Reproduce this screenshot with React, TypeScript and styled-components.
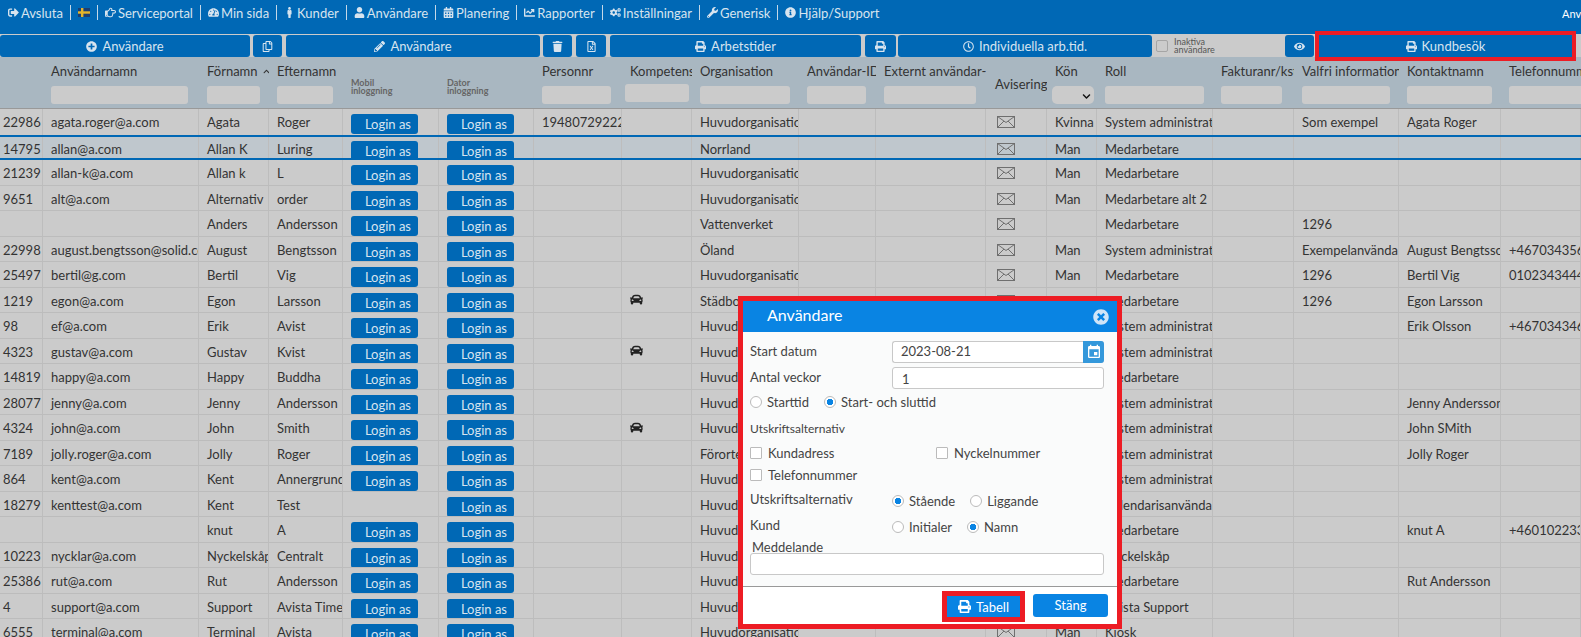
import React from "react";
import styled, { createGlobalStyle } from "styled-components";
import {
  FaCalendarAlt,
  FaCar,
  FaChartLine,
  FaChevronDown,
  FaChevronUp,
  FaCogs,
  FaEye,
  FaInfoCircle,
  FaMale,
  FaPencilAlt,
  FaPlusCircle,
  FaPrint,
  FaRegClock,
  FaRegCopy,
  FaRegFileExcel,
  FaRegHandPointRight,
  FaSignOutAlt,
  FaTachometerAlt,
  FaTimesCircle,
  FaTrash,
  FaUser,
  FaWrench,
} from "react-icons/fa";
import { MdEvent } from "react-icons/md";

const BLUE = "#0068b5";
const MODAL_BLUE = "#0984e3";
const RED = "#ed1c24";
const COLUMNS =
  "43px 156px 70px 74px 96px 95px 88px 70px 107px 77px 110px 61px 50px 116px 81px 105px 102px 1fr";

interface UserRow {
  id?: string;
  email?: string;
  first: string;
  last: string;
  personnr?: string;
  car?: boolean;
  org: string;
  gender?: string;
  role: string;
  info?: string;
  contact?: string;
  phone?: string;
  noMobile?: boolean;
}

const rows: UserRow[] = [
  { id: "22986", email: "agata.roger@a.com", first: "Agata", last: "Roger", personnr: "194807292223", org: "Huvudorganisation", gender: "Kvinna", role: "System administrator", info: "Som exempel", contact: "Agata Roger" },
  { id: "14795", email: "allan@a.com", first: "Allan K", last: "Luring", org: "Norrland", gender: "Man", role: "Medarbetare" },
  { id: "21239", email: "allan-k@a.com", first: "Allan k", last: "L", org: "Huvudorganisation", gender: "Man", role: "Medarbetare" },
  { id: "9651", email: "alt@a.com", first: "Alternativ", last: "order", org: "Huvudorganisation", gender: "Man", role: "Medarbetare alt 2" },
  { first: "Anders", last: "Andersson", org: "Vattenverket", role: "Medarbetare", info: "1296" },
  { id: "22998", email: "august.bengtsson@solid.com", first: "August", last: "Bengtsson", org: "Öland", gender: "Man", role: "System administrator", info: "Exempelanvändare", contact: "August Bengtsson", phone: "+46703435625455" },
  { id: "25497", email: "bertil@g.com", first: "Bertil", last: "Vig", org: "Huvudorganisation", gender: "Man", role: "Medarbetare", info: "1296", contact: "Bertil Vig", phone: "01023434444" },
  { id: "1219", email: "egon@a.com", first: "Egon", last: "Larsson", car: true, org: "Städbolaget", gender: "Man", role: "Medarbetare", info: "1296", contact: "Egon Larsson" },
  { id: "98", email: "ef@a.com", first: "Erik", last: "Avist", org: "Huvudorganisation", gender: "Man", role: "System administrator", contact: "Erik Olsson", phone: "+46703434645655" },
  { id: "4323", email: "gustav@a.com", first: "Gustav", last: "Kvist", car: true, org: "Huvudorganisation", gender: "Man", role: "System administrator" },
  { id: "14819", email: "happy@a.com", first: "Happy", last: "Buddha", org: "Huvudorganisation", gender: "Man", role: "Medarbetare" },
  { id: "28077", email: "jenny@a.com", first: "Jenny", last: "Andersson", org: "Huvudorganisation", gender: "Kvinna", role: "System administrator", contact: "Jenny Andersson" },
  { id: "4324", email: "john@a.com", first: "John", last: "Smith", car: true, org: "Huvudorganisation", gender: "Man", role: "System administrator", contact: "John SMith" },
  { id: "7189", email: "jolly.roger@a.com", first: "Jolly", last: "Roger", org: "Förorten", gender: "Man", role: "System administrator", contact: "Jolly Roger" },
  { id: "864", email: "kent@a.com", first: "Kent", last: "Annergrund", org: "Huvudorganisation", gender: "Man", role: "System administrator" },
  { id: "18279", email: "kenttest@a.com", first: "Kent", last: "Test", org: "Huvudorganisation", gender: "Man", role: "Kalendarisanvändare", noMobile: true },
  { first: "knut", last: "A", org: "Huvudorganisation", gender: "Man", role: "Medarbetare", contact: "knut A", phone: "+46010223332255" },
  { id: "10223", email: "nycklar@a.com", first: "Nyckelskåp", last: "Centralt", org: "Huvudorganisation", role: "Nyckelskåp" },
  { id: "25386", email: "rut@a.com", first: "Rut", last: "Andersson", org: "Huvudorganisation", gender: "Kvinna", role: "Medarbetare", contact: "Rut Andersson" },
  { id: "4", email: "support@a.com", first: "Support", last: "Avista Time", org: "Huvudorganisation", role: "Avista Support" },
  { id: "6555", email: "terminal@a.com", first: "Terminal", last: "Avista", org: "Huvudorganisation", gender: "Man", role: "Kiosk" },
];

const navItems = [
  { label: "Serviceportal", icon: <FaRegHandPointRight /> },
  { label: "Min sida", icon: <FaTachometerAlt /> },
  { label: "Kunder", icon: <FaMale /> },
  { label: "Användare", icon: <FaUser /> },
  { label: "Planering", icon: <FaCalendarAlt /> },
  { label: "Rapporter", icon: <FaChartLine /> },
  { label: "Inställningar", icon: <FaCogs /> },
  { label: "Generisk", icon: <FaWrench /> },
  { label: "Hjälp/Support", icon: <FaInfoCircle /> },
];

const filters = [
  { label: "Användarnamn", left: 0, width: 137 },
  { label: "Förnamn", left: 0, width: 53, sorted: true },
  { label: "Efternamn", left: 0, width: 56 },
];

const filtersAfter = [
  { label: "Personnr", left: 0, width: 69 },
  { label: "Kompetens", left: -5, width: 64, raised: true },
  { label: "Organisation", left: 0, width: 90 },
  { label: "Användar-ID", left: 0, width: 59 },
  { label: "Externt användar-ID", left: 0, width: 92 },
];

const filtersEnd = [
  { label: "Roll", left: 0, width: 99 },
  { label: "Fakturanr/kst €", left: 0, width: 61 },
  { label: "Valfri information", left: 0, width: 88 },
  { label: "Kontaktnamn", left: 0, width: 85 },
  { label: "Telefonnummer", left: 0, width: 100 },
];

function Envelope() {
  return (
    <EnvelopeIcon viewBox="0 0 18 12" fill="none" stroke="#6f6f6f" strokeWidth="1">
      <rect x="0.5" y="0.5" width="17" height="11" />
      <path d="M0.5 0.5L9 6.5L17.5 0.5M0.5 11.5L7 5M17.5 11.5L11 5" />
    </EnvelopeIcon>
  );
}

function Flag() {
  return (
    <svg width="12" height="9" viewBox="0 0 12 9">
      <rect width="12" height="9" fill="#1b3f73" />
      <rect x="3" width="2.4" height="9" fill="#e3b52b" />
      <rect y="3.3" width="12" height="2.4" fill="#e3b52b" />
    </svg>
  );
}

export default function App() {
  return (
    <Page>
      <GlobalStyle />
      <NavBar>
        <NavItem $first>
          <FaSignOutAlt />
          Avsluta
        </NavItem>
        <NavItem>
          <Flag />
        </NavItem>
        {navItems.map((item) => (
          <NavItem key={item.label}>
            {item.icon}
            {item.label}
          </NavItem>
        ))}
        <NavUser>Användare</NavUser>
      </NavBar>

      <Toolbar>
        <ToolButton $w={250}>
          <FaPlusCircle /> Användare
        </ToolButton>
        <ToolButton $w={29} $gap={3}>
          <FaRegCopy />
        </ToolButton>
        <ToolButton $w={254} $gap={4}>
          <FaPencilAlt /> Användare
        </ToolButton>
        <ToolButton $w={29} $gap={3}>
          <FaTrash />
        </ToolButton>
        <ToolButton $w={30} $gap={4}>
          <FaRegFileExcel />
        </ToolButton>
        <ToolButton $w={251} $gap={4}>
          <FaPrint /> Arbetstider
        </ToolButton>
        <ToolButton $w={31} $gap={4}>
          <FaPrint />
        </ToolButton>
        <ToolButton $w={254} $gap={2}>
          <FaRegClock /> Individuella arb.tid.
        </ToolButton>
        <InactiveBox>
          <InactiveCheck />
          <InactiveLabel>
            Inaktiva
            <br />
            användare
          </InactiveLabel>
        </InactiveBox>
        <ToolButton $w={29}>
          <FaEye />
        </ToolButton>
        <KundButton $w={253} $gap={5}>
          <FaPrint /> Kundbesök
        </KundButton>
      </Toolbar>

      <HeaderRow>
        <span />
        {filters.map((f) => (
          <HeadCell key={f.label}>
            <HeadLabel>
              {f.label}
              {f.sorted && <SortIcon />}
            </HeadLabel>
            <FilterInput $w={f.width} $left={f.left} />
          </HeadCell>
        ))}
        <HeadCell>
          <SmallHead>
            Mobil
            <br />
            inloggning
          </SmallHead>
        </HeadCell>
        <HeadCell>
          <SmallHead>
            Dator
            <br />
            inloggning
          </SmallHead>
        </HeadCell>
        {filtersAfter.map((f) => (
          <HeadCell key={f.label}>
            <HeadLabel>{f.label}</HeadLabel>
            <FilterInput $w={f.width} $left={f.left} $raised={f.raised} />
          </HeadCell>
        ))}
        <HeadCell>
          <AviseringLabel>Avisering ✉</AviseringLabel>
        </HeadCell>
        <HeadCell>
          <HeadLabel>Kön</HeadLabel>
          <GenderSelect>
            <FaChevronDown />
          </GenderSelect>
        </HeadCell>
        {filtersEnd.map((f) => (
          <HeadCell key={f.label}>
            <HeadLabel>{f.label}</HeadLabel>
            <FilterInput $w={f.width} $left={f.left} />
          </HeadCell>
        ))}
      </HeaderRow>

      {rows.map((row, i) => {
        const top = i === 0 ? 0 : i === 1 ? 3 : 2;
        const buttonTop = i === 0 ? 5 : i === 1 ? 1 : 3;
        return (
          <Row key={row.email ?? row.first} $h={i === 0 ? 28 : i === 1 ? 23 : 25.5} $blue={i < 2} $active={i === 1}>
            <IdCell $top={top}>{row.id}</IdCell>
            <Cell $top={top}>{row.email}</Cell>
            <Cell $top={top}>{row.first}</Cell>
            <Cell $top={top}>{row.last}</Cell>
            <Cell $top={top}>{!row.noMobile && <LoginButton $top={buttonTop}>Login as</LoginButton>}</Cell>
            <Cell $top={top}>
              <LoginButton $top={buttonTop}>Login as</LoginButton>
            </Cell>
            <Cell $top={top}>{row.personnr}</Cell>
            <Cell $top={top}>{row.car && <CarIcon />}</Cell>
            <Cell $top={top}>{row.org}</Cell>
            <Cell $top={top} />
            <Cell $top={top} />
            <MailCell $top={top}>
              <Envelope />
            </MailCell>
            <Cell $top={top}>{row.gender}</Cell>
            <Cell $top={top}>{row.role}</Cell>
            <Cell $top={top} />
            <Cell $top={top}>{row.info}</Cell>
            <Cell $top={top}>{row.contact}</Cell>
            <Cell $top={top}>{row.phone}</Cell>
          </Row>
        );
      })}

      <Modal>
        <ModalHeader>
          Användare
          <CloseIcon />
        </ModalHeader>
        <ModalBody>
          <FormRow>
            <FormLabel>Start datum</FormLabel>
            <DateField>
              <DateValue>2023-08-21</DateValue>
              <DateButton>
                <MdEvent />
              </DateButton>
            </DateField>
          </FormRow>
          <FormRow $top={4}>
            <FormLabel>Antal veckor</FormLabel>
            <TextField>1</TextField>
          </FormRow>
          <RadioLine $top={7}>
            <Radio />
            <RadioText>Starttid</RadioText>
            <Radio $checked />
            <RadioText>Start- och sluttid</RadioText>
          </RadioLine>
          <SubTitle>Utskriftsalternativ</SubTitle>
          <CheckGrid>
            <CheckItem>
              <CheckBox />
              Kundadress
            </CheckItem>
            <CheckItem>
              <CheckBox />
              Nyckelnummer
            </CheckItem>
            <CheckItem>
              <CheckBox />
              Telefonnummer
            </CheckItem>
          </CheckGrid>
          <OptionRow>
            <FormLabel>Utskriftsalternativ</FormLabel>
            <RadioLine>
              <Radio $checked />
              <RadioText>Stående</RadioText>
              <Radio />
              <RadioText>Liggande</RadioText>
            </RadioLine>
          </OptionRow>
          <OptionRow>
            <FormLabel>Kund</FormLabel>
            <RadioLine>
              <Radio />
              <RadioText>Initialer</RadioText>
              <Radio $checked />
              <RadioText>Namn</RadioText>
            </RadioLine>
          </OptionRow>
          <MessageLabel>Meddelande</MessageLabel>
          <MessageBox />
        </ModalBody>
        <ModalFooter>
          <TableButton>
            <FaPrint /> Tabell
          </TableButton>
          <CloseButton>Stäng</CloseButton>
        </ModalFooter>
      </Modal>
    </Page>
  );
}

const GlobalStyle = createGlobalStyle`
  html, body {
    margin: 0;
    padding: 0;
    background: #cbcbcb;
  }
  * {
    box-sizing: border-box;
  }
`;

const Page = styled.div`
  position: relative;
  width: 1581px;
  height: 637px;
  overflow: hidden;
  background: #cbcbcb;
  font-family: "Liberation Sans Narrow", "Lato", sans-serif;
  font-size: 13px;
  color: #333;
`;

const NavBar = styled.div`
  height: 34px;
  background: ${BLUE};
  display: flex;
  align-items: flex-start;
  padding-top: 5px;
  color: #d7e4ef;
  font-size: 13px;
`;

const NavItem = styled.div<{ $first?: boolean }>`
  height: 15px;
  display: flex;
  align-items: center;
  gap: 2px;
  white-space: nowrap;
  padding: 0 7px 0 ${(p) => (p.$first ? 8 : 7)}px;
  border-left: ${(p) => (p.$first ? "none" : "1px solid #c5d8e8")};

  svg {
    font-size: 11px;
  }
`;

const NavUser = styled.div`
  margin-left: auto;
  width: 19px;
  overflow: hidden;
  font-size: 11px;
  line-height: 18px;
  color: #fff;
`;

const Toolbar = styled.div`
  height: 23px;
  display: flex;
  padding-top: 1px;
`;

const ToolButton = styled.div<{ $w: number; $gap?: number }>`
  width: ${(p) => p.$w}px;
  margin-left: ${(p) => p.$gap ?? 0}px;
  flex-shrink: 0;
  background: ${BLUE};
  border-radius: 3px;
  color: #d7e4ef;
  display: flex;
  align-items: center;
  justify-content: center;
  gap: 5px;
  font-size: 13px;

  svg {
    font-size: 11px;
  }
`;

const KundButton = styled(ToolButton)`
  position: relative;
  outline: 4px solid ${RED};
  border-radius: 0;
`;

const InactiveBox = styled.div`
  width: 133px;
  flex-shrink: 0;
  display: flex;
  align-items: center;
  padding-left: 4px;
  gap: 6px;
`;

const InactiveCheck = styled.div`
  width: 12px;
  height: 12px;
  border: 1px solid #a5a5a5;
  border-radius: 2px;
`;

const InactiveLabel = styled.div`
  font-size: 9px;
  line-height: 8.5px;
  color: #555;
`;

const HeaderRow = styled.div`
  height: 52px;
  display: grid;
  grid-template-columns: ${COLUMNS};
  background: #a9b7c1;
  border-bottom: 1px solid #999;
`;

const HeadCell = styled.div`
  position: relative;
  padding: 7px 0 0 8px;
  overflow: hidden;
  white-space: nowrap;
`;

const HeadLabel = styled.div`
  height: 15px;
  line-height: 15px;
  color: #333;
`;

const SortIcon = styled(FaChevronUp)`
  font-size: 7px;
  margin-left: 5px;
  vertical-align: 1px;
`;

const SmallHead = styled.div`
  margin-top: 15px;
  font-size: 9px;
  line-height: 7.5px;
  font-weight: 700;
  color: #666;
`;

const AviseringLabel = styled.div`
  margin: 13px 0 0 1px;
  line-height: 15px;
`;

const FilterInput = styled.div<{ $w: number; $left: number; $raised?: boolean }>`
  width: ${(p) => p.$w}px;
  height: 18px;
  margin-top: ${(p) => (p.$raised ? 5 : 7)}px;
  margin-left: ${(p) => p.$left}px;
  background: #cbcbcb;
  border-radius: 3px;
`;

const GenderSelect = styled.div`
  width: 42px;
  height: 18px;
  margin: 7px 0 0 -3px;
  background: #cbcbcb;
  border-radius: 5px;
  display: flex;
  justify-content: flex-end;
  align-items: flex-end;
  padding: 0 3px 3px 0;
  font-size: 9px;
  color: #111;
`;

const Row = styled.div<{ $h: number; $blue?: boolean; $active?: boolean }>`
  height: ${(p) => p.$h}px;
  display: grid;
  grid-template-columns: ${COLUMNS};
  overflow: hidden;
  background: ${(p) => (p.$active ? "#bfc7cd" : "#cbcbcb")};
  border-bottom: ${(p) => (p.$blue ? `2px solid ${BLUE}` : "1px solid #bcbcbc")};
`;

const Cell = styled.div<{ $top?: number }>`
  display: flex;
  align-items: center;
  min-width: 0;
  padding: ${(p) => p.$top ?? 0}px 0 0 8px;
  border-right: 1px solid #bdbdbd;
  white-space: nowrap;
  overflow: hidden;
  color: #333;
`;

const IdCell = styled(Cell)`
  padding-left: 3px;
`;

const MailCell = styled(Cell)`
  padding-left: 11px;
`;

const EnvelopeIcon = styled.svg`
  width: 18px;
  height: 12px;
  flex-shrink: 0;
`;

const CarIcon = styled(FaCar)`
  font-size: 13px;
  color: #222;
  margin-top: -2px;
`;

const LoginButton = styled.div<{ $top: number }>`
  align-self: flex-start;
  width: 67px;
  height: 20px;
  margin-top: ${(p) => p.$top}px;
  flex-shrink: 0;
  background: ${BLUE};
  border-radius: 3px;
  color: #d7e4ef;
  text-align: right;
  line-height: 20px;
  padding-right: 7px;
`;

const Modal = styled.div`
  position: absolute;
  left: 738px;
  top: 296px;
  width: 384px;
  height: 333px;
  border: 5px solid ${RED};
  background: #fafbfb;
  display: flex;
  flex-direction: column;
`;

const ModalHeader = styled.div`
  position: relative;
  height: 31px;
  flex-shrink: 0;
  background: ${MODAL_BLUE};
  color: #fff;
  font-size: 16px;
  line-height: 28px;
  padding-left: 24px;
`;

const CloseIcon = styled(FaTimesCircle)`
  position: absolute;
  right: 8px;
  top: 8px;
  font-size: 16px;
  color: #cfe5f8;
`;

const ModalBody = styled.div`
  flex: 1;
  padding: 9px 13px 0 7px;
  color: #444;
`;

const FormRow = styled.div<{ $top?: number }>`
  height: 22px;
  margin-top: ${(p) => p.$top ?? 0}px;
  display: grid;
  grid-template-columns: 142px 1fr;
  align-items: center;
`;

const FormLabel = styled.div`
  font-size: 13px;
  margin-top: -3px;
`;

const DateField = styled.div`
  height: 22px;
  display: flex;
  border: 1px solid #c8c8c8;
  border-right: none;
  border-radius: 3px;
  background: #fff;
`;

const DateValue = styled.div`
  flex: 1;
  padding-left: 8px;
  line-height: 18px;
`;

const DateButton = styled.div`
  width: 21px;
  margin: -1px 0;
  background: #3498db;
  border-radius: 0 3px 3px 0;
  color: #fff;
  display: flex;
  align-items: center;
  justify-content: center;
  font-size: 16px;
`;

const TextField = styled.div`
  height: 22px;
  border: 1px solid #c8c8c8;
  border-radius: 3px;
  background: #fff;
  padding-left: 9px;
  line-height: 22px;
`;

const RadioLine = styled.div<{ $top?: number }>`
  height: 12px;
  margin-top: ${(p) => p.$top ?? 0}px;
  display: flex;
  align-items: center;
`;

const Radio = styled.span<{ $checked?: boolean }>`
  width: 12px;
  height: 12px;
  flex-shrink: 0;
  border: 1px solid #bbb;
  border-radius: 50%;
  background: ${(p) =>
    p.$checked ? `radial-gradient(circle, ${MODAL_BLUE} 0 3px, #fff 3.5px)` : "#fff"};
`;

const RadioText = styled.span`
  margin: 0 15px 0 5px;
  font-size: 13px;
`;

const SubTitle = styled.div`
  margin-top: 14px;
  height: 13px;
  line-height: 13px;
  font-size: 12px;
`;

const CheckGrid = styled.div`
  margin-top: 12px;
  display: grid;
  grid-template-columns: 186px 1fr;
  row-gap: 10px;
`;

const CheckItem = styled.div`
  height: 12px;
  display: flex;
  align-items: center;
  gap: 6px;
  font-size: 13px;
`;

const CheckBox = styled.span`
  width: 12px;
  height: 12px;
  border: 1px solid #bbb;
  border-radius: 1px;
  background: #fff;
`;

const OptionRow = styled.div`
  height: 13px;
  margin-top: 13px;
  display: grid;
  grid-template-columns: 142px 1fr;
  align-items: center;
`;

const MessageLabel = styled.div`
  margin: 8px 0 0 2px;
  height: 12px;
  line-height: 12px;
`;

const MessageBox = styled.div`
  height: 22px;
  border: 1px solid #c8c8c8;
  border-radius: 3px;
  background: #fff;
`;

const ModalFooter = styled.div`
  height: 38px;
  flex-shrink: 0;
  background: #fff;
  border-top: 1px solid #999;
  display: flex;
  justify-content: flex-end;
  align-items: flex-end;
  gap: 13px;
  padding: 0 9px 7px 0;
`;

const TableButton = styled.div`
  width: 73px;
  height: 21px;
  background: ${MODAL_BLUE};
  outline: 5px solid ${RED};
  color: #fff;
  display: flex;
  align-items: center;
  justify-content: center;
  gap: 5px;
  font-size: 13px;
`;

const CloseButton = styled.div`
  width: 75px;
  height: 23px;
  background: ${MODAL_BLUE};
  border-radius: 3px;
  color: #fff;
  text-align: center;
  line-height: 22px;
  font-size: 13px;
`;
